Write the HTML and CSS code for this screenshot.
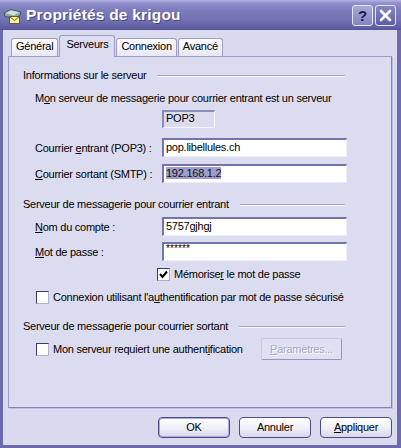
FILE: index.html
```html
<!DOCTYPE html>
<html lang="fr">
<head>
<meta charset="utf-8">
<title>Propriétés de krigou</title>
<link rel="stylesheet" href="styles.css">
</head>
<body>
<div class="window">
  <div class="titlebar">
    <svg class="app-icon" viewBox="0 0 17 16" aria-hidden="true">
      <polygon points="0.5,5 7,1.5 16.5,4 16.5,7 9.5,11 0.5,8" fill="#8fa9a3" stroke="#3e5c5a" stroke-width="1"/>
      <polygon points="1.5,5 7,2.3 15.5,4.3 9.5,7.6" fill="#cfe0da"/>
      <rect x="5.5" y="8.5" width="10" height="7" fill="#faf2a4" stroke="#6a5a22" stroke-width="1"/>
      <polyline points="5.5,8.5 10.5,12.5 15.5,8.5" fill="none" stroke="#6a5a22" stroke-width="1"/>
    </svg>
    <span class="title">Propriétés de krigou</span>
    <div class="tb-buttons">
      <span class="tb-btn help">?</span>
      <span class="tb-btn close">
        <svg viewBox="0 0 19 19" aria-hidden="true"><path d="M5 5 L14 14 M14 5 L5 14" stroke="#fff" stroke-width="2.6" stroke-linecap="round"/></svg>
      </span>
    </div>
  </div>

  <div class="client">
    <div class="tabs">
      <div class="tab">Général</div>
      <div class="tab active">Serveurs</div>
      <div class="tab">Connexion</div>
      <div class="tab">Avancé</div>
    </div>

    <div class="panel">
      <div class="group-head"><span>Informations sur le serveur</span><i class="rule"></i></div>
      <p class="note">M<u>o</u>n serveur de messagerie pour courrier entrant est un serveur</p>
      <div class="row row-pop"><span class="field readonly">POP3</span></div>
      <div class="row row-in"><span class="label">Courrier <u>e</u>ntrant (POP3) :</span><span class="field">pop.libellules.ch</span></div>
      <div class="row row-out"><span class="label"><u>C</u>ourrier sortant (SMTP) :</span><span class="field"><span class="sel">192.168.1.2</span></span></div>

      <div class="group-head gh2"><span>Serveur de messagerie pour courrier entrant</span><i class="rule"></i></div>
      <div class="row row-acc"><span class="label"><u>N</u>om du compte :</span><span class="field">5757gjhgj</span></div>
      <div class="row row-pw"><span class="label"><u>M</u>ot de passe :</span><span class="field"><span class="pw">******</span></span></div>
      <div class="check row-remember"><span class="cb"><svg viewBox="0 0 11 11" aria-hidden="true"><polyline points="2,5 4.5,8 9,2.5" fill="none" stroke="#000" stroke-width="2"/></svg></span><span>Mémorise<u>r</u> le mot de passe</span></div>
      <div class="check row-spa"><span class="cb"></span><span>Connexion utilisant l'a<u>u</u>thentification par mot de passe sécurisé</span></div>

      <div class="group-head gh3"><span>Serveur de messagerie pour courrier sortant</span><i class="rule"></i></div>
      <div class="check row-auth"><span class="cb"></span><span>Mon serveur requiert une authent<u>i</u>fication</span><span class="btn-disabled"><u>P</u>aramètres...</span></div>
    </div>

    <div class="actions">
      <span class="btn default">OK</span>
      <span class="btn">Annuler</span>
      <span class="btn"><u>A</u>ppliquer</span>
    </div>
  </div>
</div>
</body>
</html>
```

FILE: styles.css
```css
html, body {
  margin: 0;
  padding: 0;
  background: #dadaee;
}

body {
  font: 11px/13px "Liberation Sans", Arial, sans-serif;
  letter-spacing: -0.25px;
  color: #000;
}

u {
  text-decoration: underline;
  text-underline-offset: 1px;
}

.window {
  width: 401px;
  height: 448px;
  display: flex;
  flex-direction: column;
  overflow: hidden;
}

/* Title bar */
.titlebar {
  height: 30px;
  box-sizing: border-box;
  display: flex;
  align-items: center;
  padding: 0 5px 0 4px;
  background: linear-gradient(#b4b4e2 0, #9090cc 3px, #7c7cbc 10px, #7272b4 20px, #5e5ea0 28px, #55558f 30px);
}

.app-icon {
  width: 17px;
  height: 16px;
  margin: 2px 5px 0 0;
  flex: none;
}

.title {
  flex: 1;
  font: bold 15.5px "Liberation Sans", Arial, sans-serif;
  color: #fff;
  letter-spacing: 0.2px;
  text-shadow: 1px 1px 0 #46467e;
  white-space: nowrap;
}

.tb-buttons {
  display: flex;
  gap: 2px;
  margin-top: 1px;
}

.tb-btn {
  width: 21px;
  height: 21px;
  box-sizing: border-box;
  border: 1px solid #e6e6fa;
  border-radius: 3px;
  display: flex;
  align-items: center;
  justify-content: center;
}

.tb-btn.help {
  background: linear-gradient(#a8a8d8, #8484c0);
  color: #1c1c52;
  font: bold 15px/1 "Liberation Sans", Arial, sans-serif;
  letter-spacing: 0;
}

.tb-btn.close {
  background: linear-gradient(#8686c4, #5e5ea4);
}

.tb-btn.close svg {
  width: 19px;
  height: 19px;
}

/* Client area */
.client {
  flex: 1;
  display: flex;
  flex-direction: column;
  border-style: solid;
  border-color: #6c6cac;
  border-width: 0 4px 3px 3px;
  padding: 0 5px;
  background: #dadaee;
}

.tabs {
  display: flex;
  align-items: flex-end;
  height: 18px;
  margin-top: 8px;
  padding-left: 3px;
}

.tab {
  height: 18px;
  box-sizing: border-box;
  border: 1px solid #9c9cc8;
  border-bottom: 0;
  border-radius: 3px 3px 0 0;
  padding: 1px 4px 0;
  margin-right: 1px;
  background: linear-gradient(#fdfdff, #e8e8f6);
  white-space: nowrap;
}

.tab.active {
  height: 22px;
  margin-bottom: -1px;
  padding: 2px 6px 0;
  background: #dcdcf0;
  position: relative;
  z-index: 1;
}

.panel {
  height: 352px;
  box-sizing: border-box;
  border: 1px solid #9c9cc8;
  border-right-color: #8484b8;
  border-bottom-color: #8484b8;
  box-shadow: 1px 1px 0 #c0c0e0;
  background: #dcdcf0;
  padding: 12px 44px 0 14px;
}

.group-head {
  display: flex;
  align-items: center;
  white-space: nowrap;
}

.rule {
  flex: 1;
  height: 1px;
  margin: 1px 2px 0 11px;
  background: #a4a4cc;
  border-bottom: 1px solid #f6f6ff;
}

.gh2 { margin-top: 15px; }
.gh3 { margin-top: 16px; }

.note {
  margin: 10px 0 0 12px;
  white-space: nowrap;
}

.row {
  display: flex;
  align-items: center;
  margin-left: 12px;
}

.label {
  width: 127px;
  flex: none;
  padding-top: 2px;
  white-space: nowrap;
}

.row-pop { margin-top: 5px; padding-left: 127px; }
.row-in { margin-top: 10px; }
.row-out { margin-top: 7px; }
.row-acc { margin-top: 6px; }
.row-pw { margin-top: 6px; }

.field {
  box-sizing: border-box;
  width: 185px;
  height: 19px;
  flex: none;
  background: #fff;
  border-style: solid;
  border-width: 2px 1px 1px 2px;
  border-color: #7474ac #eeeefa #eeeefa #7474ac;
  padding: 0 2px;
  line-height: 15px;
  white-space: nowrap;
  overflow: hidden;
}

.field.readonly {
  width: 53px;
  height: 18px;
  background: #dcdcf0;
  line-height: 12px;
  padding-left: 2px;
  border-color: #8a8abc #f6f6ff #f6f6ff #8a8abc;
}

.sel {
  background: #9e9ec8;
  color: #10102a;
}

.pw {
  font: 10px/10px "Liberation Sans", Arial, sans-serif;
  vertical-align: top;
  letter-spacing: 0.1px;
}

.check {
  display: flex;
  align-items: center;
  white-space: nowrap;
}

.cb {
  width: 13px;
  height: 13px;
  box-sizing: border-box;
  flex: none;
  margin-right: 4px;
  background: #fff;
  border: 1px solid;
  border-color: #3a3a6c #b0b0d2 #b0b0d2 #3a3a6c;
  display: flex;
  align-items: center;
  justify-content: center;
}

.cb svg {
  width: 11px;
  height: 11px;
}

.row-remember { margin: 7px 0 0 134px; }
.row-spa { margin: 10px 0 0 13px; }
.row-auth { margin: 5px 0 0 13px; }

.btn-disabled {
  width: 81px;
  height: 22px;
  box-sizing: border-box;
  margin: 0 5px 0 auto;
  border: 1px solid;
  border-color: #c8c8e6 #9494c2 #9494c2 #c8c8e6;
  border-radius: 2px;
  background: #e0e0f2;
  color: #a6a6c8;
  text-shadow: 1px 1px 0 #ffffff;
  display: flex;
  align-items: center;
  justify-content: center;
}

/* Bottom buttons */
.actions {
  display: flex;
  justify-content: flex-end;
  gap: 9px;
  margin-top: 9px;
}

.btn {
  width: 72px;
  height: 21px;
  box-sizing: border-box;
  border: 1px solid #4c4c8a;
  border-radius: 4px;
  background: linear-gradient(#ffffff, #eeeef8 55%, #d6d6ea);
  display: flex;
  align-items: center;
  justify-content: center;
  white-space: nowrap;
}

.btn.default {
  box-shadow: inset 0 0 0 1px #a8a8dc;
}
```
